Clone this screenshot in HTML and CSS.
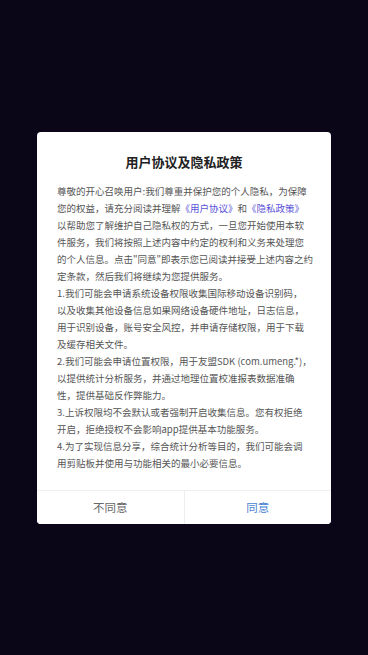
FILE: index.html
```html
<!DOCTYPE html>
<html lang="zh-CN">
<head>
  <meta charset="UTF-8">
  <meta name="viewport" content="width=device-width, initial-scale=1.0">
  <title>用户协议及隐私政策</title>
  <link rel="stylesheet" href="styles.css">
</head>
<body>
  <div class="mask">
    <div class="dialog">
      <h2 class="dialog-title">用户协议及隐私政策</h2>
      <div class="dialog-body">
        <p>尊敬的开心召唤用户:我们尊重并保护您的个人隐私，为保障<br>您的权益，请充分阅读并理解<a href="#">《用户协议》</a>和<a href="#">《隐私政策》</a><br>以帮助您了解维护自己隐私权的方式，一旦您开始使用本软<br>件服务，我们将按照上述内容中约定的权利和义务来处理您<br>的个人信息。点击"同意"即表示您已阅读并接受上述内容之约<br>定条款，然后我们将继续为您提供服务。</p>
        <p>1.我们可能会申请系统设备权限收集国际移动设备识别码，<br>以及收集其他设备信息如果网络设备硬件地址，日志信息，<br>用于识别设备，账号安全风控，并申请存储权限，用于下载<br>及缓存相关文件。</p>
        <p>2.我们可能会申请位置权限，用于友盟SDK (com.umeng.*)，<br>以提供统计分析服务，并通过地理位置校准报表数据准确<br>性，提供基础反作弊能力。</p>
        <p>3.上诉权限均不会默认或者强制开启收集信息。您有权拒绝<br>开启，拒绝授权不会影响app提供基本功能服务。</p>
        <p>4.为了实现信息分享，综合统计分析等目的，我们可能会调<br>用剪贴板并使用与功能相关的最小必要信息。</p>
      </div>
      <div class="dialog-footer">
        <button class="btn btn-cancel">不同意</button>
        <button class="btn btn-ok">同意</button>
      </div>
    </div>
  </div>
</body>
</html>
```

FILE: styles.css
```css
html, body {
  margin: 0;
  padding: 0;
  height: 100%;
}
body {
  font-family: "Noto Sans CJK SC", "Noto Sans", sans-serif;
  background-color: #0a0517;
}
.mask {
  height: 100%;
  display: flex;
  align-items: center;
  justify-content: center;
}
.dialog {
  width: 294px;
  background-color: #fff;
  border-radius: 4px;
  overflow: hidden;
}
.dialog-title {
  margin: 0;
  padding: 20px 0 0;
  text-align: center;
  font-size: 13px;
  line-height: 20px;
  font-weight: bold;
  color: #222;
}
.dialog-body {
  padding: 11px 12px 18px 20px;
  font-size: 9.5px;
  line-height: 17px;
  color: #555;
}
.dialog-body p {
  margin: 0;
  white-space: nowrap;
}
.dialog-body a {
  color: #5a52d8;
  text-decoration: none;
}
.dialog-footer {
  display: flex;
  border-top: 1px solid #eee;
}
.btn {
  flex: 1;
  height: 33px;
  border: none;
  background: #fff;
  font-family: inherit;
  font-size: 11.5px;
  padding: 0;
}
.btn-cancel {
  color: #666;
  border-right: 1px solid #eee;
}
.btn-ok {
  color: #4a7fd2;
}
```
